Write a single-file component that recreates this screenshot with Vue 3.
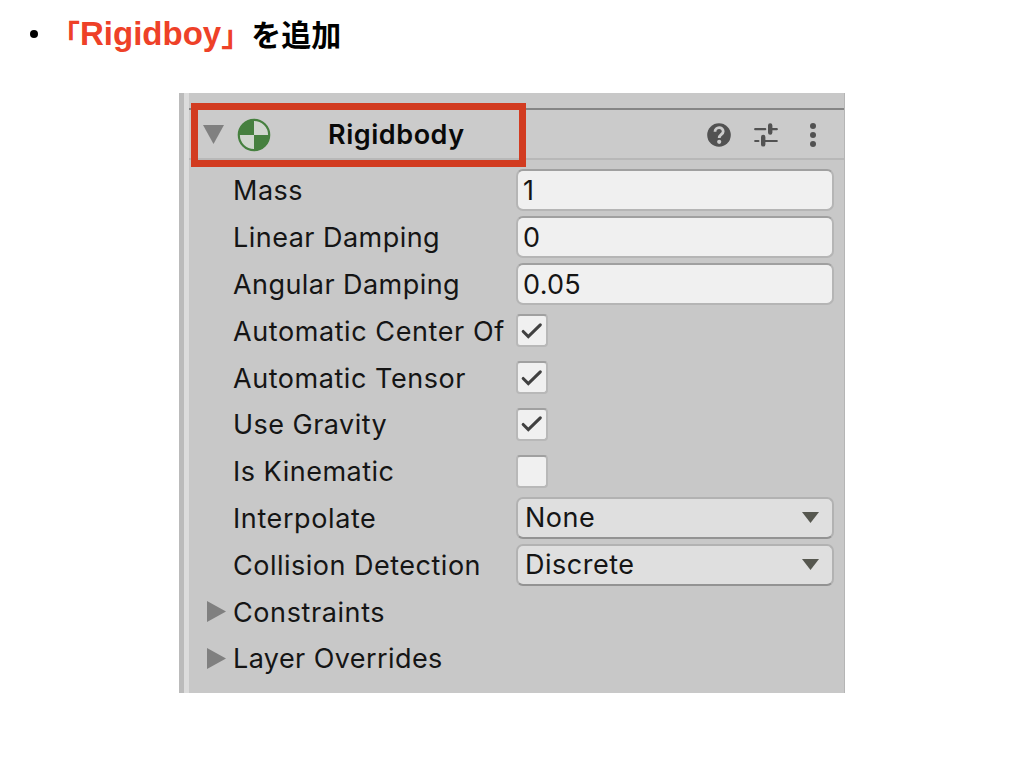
<template>
  <main class="slide">
    <h1 class="heading">
      <span class="bullet" aria-hidden="true"></span>
      <span class="accent"><span>「</span><span class="latin">Rigidboy</span><span>」</span></span>
      <span class="rest">を追加</span>
    </h1>

    <section class="inspector">
      <header class="component-header">
        <svg class="fold" width="21" height="19" viewBox="0 0 21 19"><path d="M0 0h21L10.500 19z" fill="#808080" /></svg>
        <svg class="body-icon" width="34" height="34" viewBox="0 0 34 34">
          <circle cx="17" cy="17" r="15.200" fill="#d0d6ce" stroke="#46803f" stroke-width="2.200" />
          <path d="M17 17V1.500A15.500 15.500 0 0 0 1.500 17zM17 17v15.500A15.500 15.500 0 0 0 32.500 17z" fill="#46803f" />
        </svg>
        <h2 class="title">Rigidbody</h2>
        <div class="actions">
          <svg width="24" height="24" viewBox="0 0 24 24">
            <circle cx="12" cy="12" r="11.800" fill="#525252" />
            <path d="M8 8.800C8 3.400 16.200 3.400 16.200 8.400C16.200 11.300 12.200 11.400 12.200 15" fill="none" stroke="#cbcbcb" stroke-width="2.800" />
            <circle cx="12.200" cy="18.800" r="2.100" fill="#cbcbcb" />
          </svg>
          <svg width="24" height="24" viewBox="0 0 24 24" stroke="#525252" stroke-linecap="round">
            <path d="M1.200 6.200h10M17 6.200h5.800M1.200 18h3.200M10 18h12.800" stroke-width="2.200" />
            <path d="M16.200 2.500v7M9.200 14v7.400" stroke-width="4.400" />
          </svg>
          <svg width="24" height="24" viewBox="0 0 24 24" fill="#525252">
            <circle cx="12" cy="3" r="3" /><circle cx="12" cy="12" r="3" /><circle cx="12" cy="21" r="3" />
          </svg>
        </div>
        <div class="highlight"></div>
      </header>

      <div class="rows">
        <div v-for="row in rows" :key="row.label" class="row">
          <span class="gutter">
            <svg v-if="row.type === 'group'" width="19" height="21" viewBox="0 0 19 21"><path d="M0 0v21l19-10.500z" fill="#808080" /></svg>
          </span>
          <span class="label" :style="{ letterSpacing: row.spacing + 'px' }">{{ row.label }}</span>
          <div v-if="row.type === 'number'" class="field">{{ row.value }}</div>
          <div v-else-if="row.type === 'check'" class="checkbox">
            <svg v-if="row.value" width="22" height="18" viewBox="0 0 22 18">
              <path d="M2.200 9.500L7.300 14.500L19.300 2.800" fill="none" stroke="#404040" stroke-width="3.100" stroke-linecap="round" />
            </svg>
          </div>
          <div v-else-if="row.type === 'select'" class="field select">
            <span>{{ row.value }}</span>
            <svg width="17" height="11" viewBox="0 0 17 11"><path d="M0 0h17L8.500 11z" fill="#56574f" /></svg>
          </div>
        </div>
      </div>
    </section>
  </main>
</template>

<script setup>
const rows = [
  { label: 'Mass', type: 'number', value: '1', spacing: 0.5 },
  { label: 'Linear Damping', type: 'number', value: '0', spacing: 0.47 },
  { label: 'Angular Damping', type: 'number', value: '0.05', spacing: 0.44 },
  { label: 'Automatic Center Of', type: 'check', value: true, spacing: 0.58 },
  { label: 'Automatic Tensor', type: 'check', value: true, spacing: 0.55 },
  { label: 'Use Gravity', type: 'check', value: true, spacing: 0.47 },
  { label: 'Is Kinematic', type: 'check', value: false, spacing: 0.5 },
  { label: 'Interpolate', type: 'select', value: 'None', spacing: 0.6 },
  { label: 'Collision Detection', type: 'select', value: 'Discrete', spacing: 0.5 },
  { label: 'Constraints', type: 'group', spacing: 0.6 },
  { label: 'Layer Overrides', type: 'group', spacing: 0.42 },
]
</script>

<style>
body { background: #fff; }
</style>

<style scoped>
* { box-sizing: border-box; }
svg { display: block; flex-shrink: 0; }

.slide {
  width: 1024px;
  height: 768px;
  overflow: hidden;
  background: #fff;
}

.heading {
  display: flex;
  align-items: center;
  height: 70px;
  margin: 0;
  padding-left: 30px;
  font-family: "Noto Sans CJK JP", sans-serif;
  font-size: 30px;
  font-weight: 700;
  line-height: 66px;
  white-space: nowrap;
}
.bullet {
  width: 8px;
  height: 8px;
  border-radius: 50%;
  background: #000;
  margin: 0 12px 2px 0;
}
.accent { display: flex; height: 70px; color: #ee4128; }
.latin { font-family: "Liberation Sans", sans-serif; font-size: 33px; line-height: 68px; }
.rest { height: 70px; color: #000; }

.inspector {
  width: 666px;
  height: 600px;
  margin: 23px 0 0 179px;
  padding-top: 15px;
  border-left: 5px solid #bbb;
  border-right: 1px solid #b5b5b5;
  background: linear-gradient(90deg, #dcdcdc 5px, #c8c8c8 5px);
  font-family: Inter, sans-serif;
}

.component-header {
  position: relative;
  display: flex;
  align-items: center;
  height: 52px;
  margin-left: 5px;
  padding: 1px 0 0 14px;
  border-top: 2px solid #858585;
  border-bottom: 2px solid #b8b8b8;
  background: #cbcbcb;
}
.body-icon { margin-left: 13px; }
.title {
  margin: 1px 0 0 57px;
  font-size: 27px;
  font-weight: 600;
  line-height: 34px;
  letter-spacing: 0.55px;
  color: #090909;
}
.actions {
  display: flex;
  gap: 23px;
  margin-left: auto;
  padding-right: 19px;
}
.highlight {
  position: absolute;
  left: 2px;
  top: -7px;
  width: 335px;
  height: 64px;
  border: 7px solid #d23b20;
}

.rows { padding-top: 7px; }
.row {
  display: flex;
  align-items: center;
  height: 46.8px;
  font-size: 27px;
  color: #151515;
  white-space: nowrap;
}
.gutter { width: 49px; padding-left: 23px; flex-shrink: 0; }
.label { width: 283px; padding-top: 2px; flex-shrink: 0; line-height: 36px; }

.field {
  width: 318px;
  height: 42px;
  padding-left: 5px;
  border: 2px solid #b5b5b5;
  border-top-color: #a0a0a0;
  border-radius: 7px;
  background: #f0f0f0;
  line-height: 40px;
  letter-spacing: 0.3px;
}
.select {
  display: flex;
  align-items: center;
  justify-content: space-between;
  padding: 0 13px 0 7px;
  border-color: #b2b2b2;
  border-bottom-color: #939393;
  background: #dfdfdf;
  line-height: 36px;
  letter-spacing: 0.5px;
}
.checkbox {
  display: flex;
  align-items: center;
  justify-content: center;
  width: 32px;
  height: 33px;
  border: 2px solid #b8b8b8;
  border-top-color: #a0a0a0;
  border-radius: 4px;
  background: #f0f0f0;
}
</style>
